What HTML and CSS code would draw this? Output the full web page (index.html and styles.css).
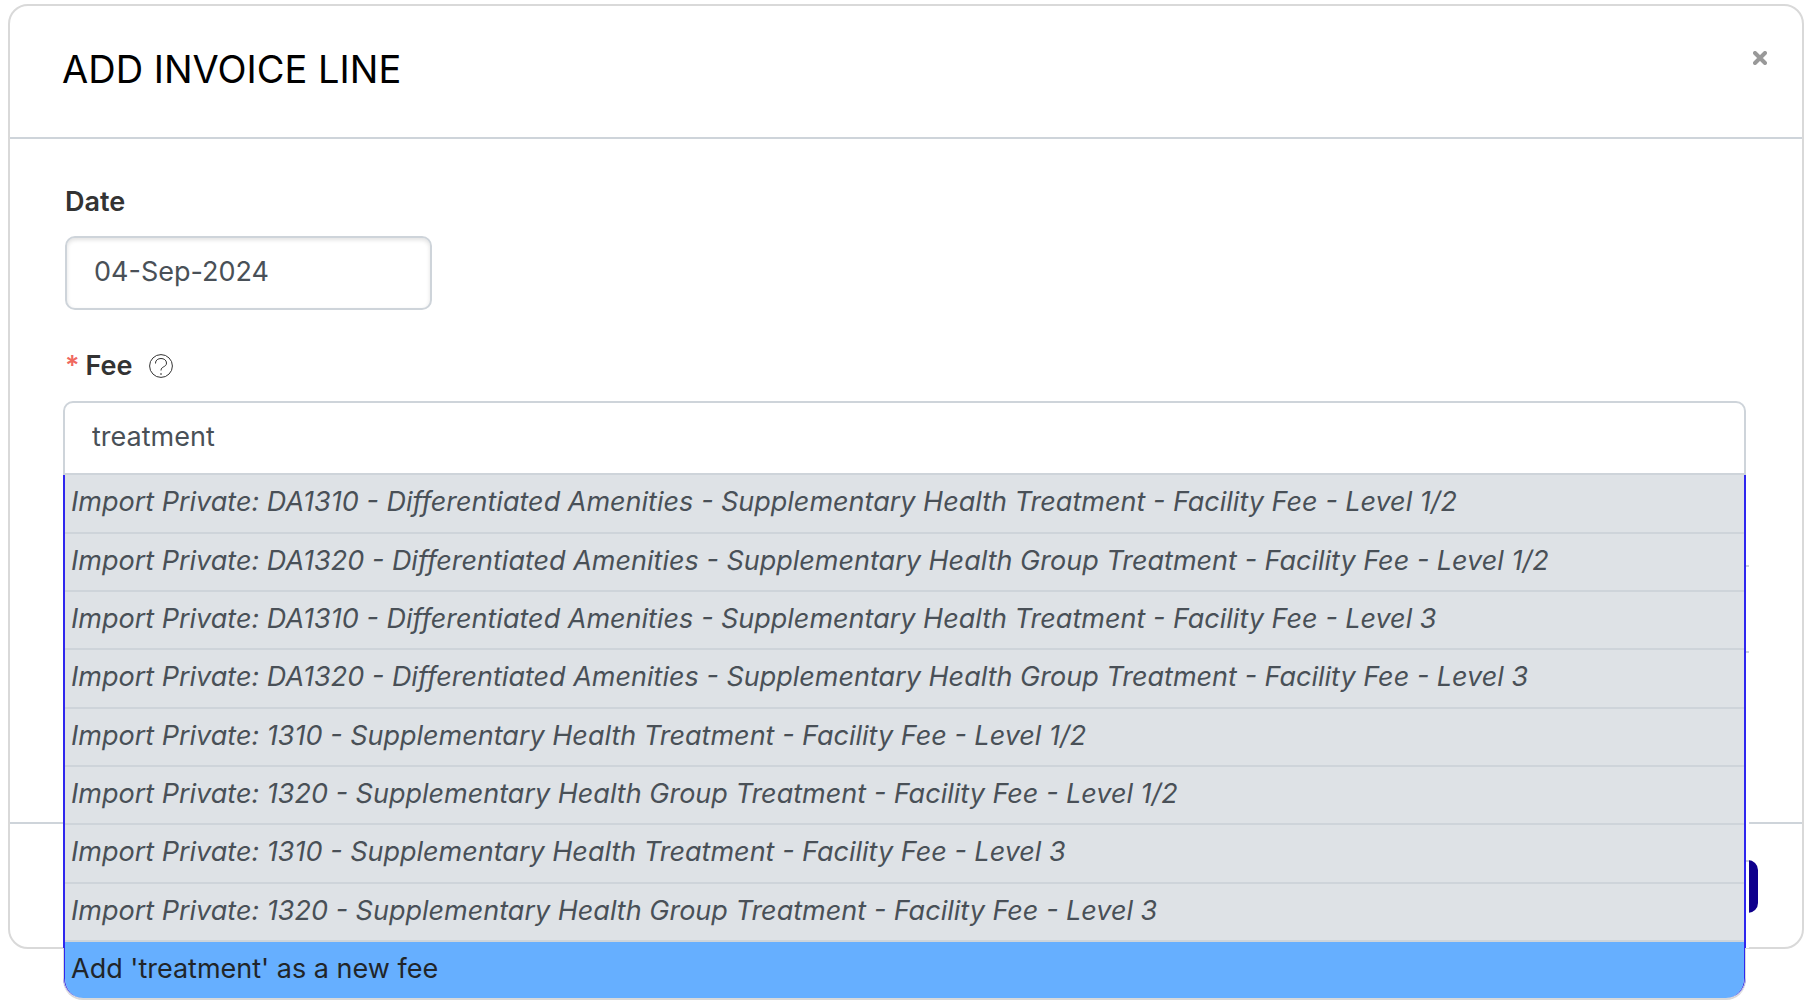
FILE: index.html
```html
<!DOCTYPE html>
<html lang="en">
<head>
<meta charset="utf-8">
<title>Add invoice line</title>
<link rel="stylesheet" href="styles.css">
</head>
<body>
<form class="modal">
  <header class="modal-header">
    <h1 class="title">ADD INVOICE LINE</h1>
    <button class="close" type="button" aria-label="Close">
      <svg width="14" height="14" viewBox="0 0 14 14"><path d="M2 2l10 10M12 2L2 12" stroke="#999" stroke-width="4" stroke-linecap="round"/></svg>
    </button>
  </header>
  <div class="modal-body">
    <label class="label" for="date">Date</label>
    <input class="field date" id="date" type="text" value="04-Sep-2024">
    <div class="label-row">
      <span class="required">*</span>
      <label class="label" for="fee">Fee</label>
      <svg class="help" width="24" height="24" viewBox="0 0 24 24" fill="none" stroke="#333"><circle cx="12" cy="12" r="11.4"/><path d="M6.500 9.500v-.5c0-6 11-6 11 0 0 4.500-5.500 3-5.500 7.500M12 19v2"/></svg>
    </div>
    <div class="combo">
      <input class="field fee" id="fee" type="text" value="treatment" autocomplete="off">
      <div class="menu">
        <ul class="options">
          <li class="option">Import Private: DA1310 - Differentiated Amenities - Supplementary Health Treatment - Facility Fee - Level 1/2</li>
          <li class="option">Import Private: DA1320 - Differentiated Amenities - Supplementary Health Group Treatment - Facility Fee - Level 1/2</li>
          <li class="option">Import Private: DA1310 - Differentiated Amenities - Supplementary Health Treatment - Facility Fee - Level 3</li>
          <li class="option">Import Private: DA1320 - Differentiated Amenities - Supplementary Health Group Treatment - Facility Fee - Level 3</li>
          <li class="option">Import Private: 1310 - Supplementary Health Treatment - Facility Fee - Level 1/2</li>
          <li class="option">Import Private: 1320 - Supplementary Health Group Treatment - Facility Fee - Level 1/2</li>
          <li class="option">Import Private: 1310 - Supplementary Health Treatment - Facility Fee - Level 3</li>
          <li class="option">Import Private: 1320 - Supplementary Health Group Treatment - Facility Fee - Level 3</li>
          <li class="option add">Add 'treatment' as a new fee</li>
        </ul>
      </div>
    </div>
    <input class="field detail" type="text" aria-label="Description">
  </div>
  <footer class="modal-footer">
    <button class="save" type="submit" aria-label="Save"></button>
  </footer>
</form>
</body>
</html>
```

FILE: styles.css
```css
* { box-sizing: border-box; }
body {
  min-height: 100vh;
  margin: 0;
  padding: 4px 6px 0 8px;
  background: #fff;
  color: #333;
  font: 27px/36px Inter, "Liberation Sans", sans-serif;
}
.modal {
  border: 2px solid #d9d9d9;
  border-radius: 20px;
}
.modal-header {
  display: flex;
  justify-content: space-between;
  align-items: flex-start;
  height: 133px;
  padding: 38px 35px 0 52px;
  border-bottom: 2px solid #ced4da;
}
.title {
  margin: 0;
  color: #000;
  font-size: 38px;
  font-weight: 400;
  line-height: 50px;
}
.close {
  display: flex;
  margin-top: 7px;
  padding: 0;
  border: 0;
  background: none;
}
.modal-body { padding: 45px 55px 0; }
.label { display: block; font-weight: 600; }
.field {
  display: block;
  border: 2px solid #ced4da;
  border-radius: 10px;
  background: #fff;
  color: #495057;
  font: inherit;
  outline: 0;
}
.date {
  width: 367px;
  height: 74px;
  margin-top: 16px;
  padding: 0 27px 4px;
  box-shadow: inset 0 2px 4px rgb(0 0 0 / 12%);
}
.label-row {
  display: flex;
  align-items: center;
  margin-top: 38px;
}
.required { margin-right: 6px; color: #f0695f; font-weight: 600; }
.help { margin-left: 16px; }
.combo { position: relative; margin: 17px 1px 0 -2px; }
/* Gutter that keeps the page behind clear of the open menu */
.combo::after {
  content: "";
  position: absolute;
  top: 100%;
  left: 0;
  right: -3px;
  height: 473px;
  background: linear-gradient(#ced4da, #ced4da) 0 385px / 100% 2px no-repeat #fff;
  z-index: 1;
}
.fee {
  width: 100%;
  height: 74px;
  padding: 0 27px 4px;
  border-radius: 10px 10px 0 0;
}
.menu {
  position: absolute;
  top: 100%;
  left: 0;
  right: 0;
  z-index: 3;
  overflow: hidden;
  border-bottom: 2px solid #d9d9d9;
  border-radius: 0 0 20px 20px;
}
.menu::after {
  content: "";
  position: absolute;
  inset: auto 0 0;
  height: 50px;
  border: solid #d9d9d9;
  border-width: 0 1px;
  border-radius: 0 0 20px 20px;
}
.options {
  margin: 0;
  padding: 0;
  list-style: none;
  border: solid #2f27ee;
  border-width: 0 2px;
  border-radius: 0 0 20px 20px;
  background: #dee2e6;
  overflow: hidden;
}
.option {
  height: 58px;
  padding: 9px 6px 0;
  border-bottom: 2px solid #ced4da;
  color: #495057;
  font-style: italic;
  white-space: nowrap;
}
.option:nth-child(3n + 1) { height: 59px; }
.option.add {
  height: 56px;
  border: 0;
  background: #66afff;
  color: #212529;
  font-style: normal;
}
.detail {
  position: relative;
  z-index: 2;
  width: calc(100% + 2px);
  height: 88px;
  margin: 90px 0 169px;
  border-right: 0;
  border-radius: 0;
}
.modal-footer {
  display: flex;
  justify-content: flex-end;
  padding: 36px 44px 34px;
  border-top: 2px solid #ced4da;
}
.save {
  width: 120px;
  height: 53px;
  border: 0;
  border-radius: 10px;
  background: #0f008c;
}
```
